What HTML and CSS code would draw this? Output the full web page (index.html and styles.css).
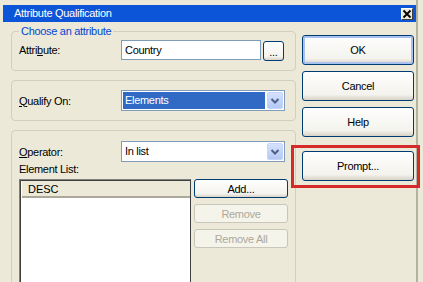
FILE: index.html
```html
<!DOCTYPE html>
<html lang="en">
<head>
    <meta charset="UTF-8">
    <title>Attribute Qualification</title>
    <link rel="stylesheet" href="styles.css">
</head>
<body>
    <div class="window">
        <div class="titlebar">
            <span class="title">Attribute Qualification</span>
            <span class="close">
                <svg width="10" height="10" viewBox="0 0 10 10"><path d="M1.5 1.5 L8.5 8.5 M8.5 1.5 L1.5 8.5" stroke="#000" stroke-width="1.8" fill="none"/></svg>
            </span>
        </div>

        <div class="dialog-body">
            <div class="groups">
                <!-- Attribute picker -->
                <div class="group g-attr">
                    <span class="legend">Choose an attribute</span>
                    <div class="row">
                        <span class="label">Attri<u>b</u>ute:</span>
                        <div class="textbox">Country</div>
                        <div class="btn browse">...</div>
                    </div>
                </div>

                <div class="group g-qualify">
                    <div class="row">
                        <span class="label"><u>Q</u>ualify On:</span>
                        <div class="combo">
                            <div class="combo-value selected">Elements</div>
                            <div class="combo-arrow">
                                <svg width="14" height="15" viewBox="0 0 14 15"><path d="M3.5 6 L7 9.5 L10.5 6" stroke="#4d6185" stroke-width="2" fill="none"/></svg>
                            </div>
                        </div>
                    </div>
                </div>

                <div class="group g-operator">
                    <div class="row">
                        <span class="label"><u>O</u>perator:</span>
                        <div class="combo">
                            <div class="combo-value">In list</div>
                            <div class="combo-arrow">
                                <svg width="14" height="15" viewBox="0 0 14 15"><path d="M3.5 6 L7 9.5 L10.5 6" stroke="#4d6185" stroke-width="2" fill="none"/></svg>
                            </div>
                        </div>
                    </div>
                    <div class="list-label">Element List:</div>
                    <div class="list-row">
                        <div class="listbox">
                            <div class="list-header">DESC</div>
                        </div>
                        <div class="list-buttons">
                            <div class="btn small">Add...</div>
                            <div class="btn small disabled">Remove</div>
                            <div class="btn small disabled">Remove All</div>
                        </div>
                    </div>
                </div>
            </div>

            <div class="actions">
                <div class="btn big default">OK</div>
                <div class="btn big">Cancel</div>
                <div class="btn big">Help</div>
                <div class="prompt-wrap">
                    <div class="btn big">Prompt...</div>
                    <div class="highlight"></div>
                </div>
            </div>
        </div>
    </div>
</body>
</html>
```

FILE: styles.css
```css
/* General Reset */
* {
    margin: 0;
    padding: 0;
    box-sizing: border-box;
}

body {
    font-family: "Liberation Sans", Arial, sans-serif;
    font-size: 11px;
    letter-spacing: -0.3px;
    background-color: #ece9d8; /* XP dialog face */
    color: #000;
    width: 423px;
    height: 282px;
    overflow: hidden;
}

.window {
    width: 418px;
    height: 282px;
    padding-top: 5px;
    border-right: 2px solid #b5b2a3;
}

/* Title bar */
.titlebar {
    margin-left: 3px;
    width: 413px;
    height: 17px;
    background: #0d55d8;
    color: #fff;
    display: flex;
    align-items: center;
    justify-content: space-between;
    padding: 0 3px 0 11px;
}

.title {
    line-height: 17px;
}

.close {
    width: 12px;
    height: 12px;
    background: #ece9d8;
    border: 1px solid;
    border-color: #fff #404040 #404040 #fff;
    display: flex;
    align-items: center;
    justify-content: center;
}

/* Main layout */
.dialog-body {
    display: flex;
    gap: 6px;
    padding-left: 11px;
    margin-top: 9px;
}

/* groups are cut off by the bottom of the screen */
.groups {
    width: 285px;
    height: 259px;
    overflow: hidden;
    display: flex;
    flex-direction: column;
    gap: 9px;
    padding-top: 8px;
    margin-top: -8px;
}

.group {
    position: relative;
    flex-shrink: 0;
    border: 1px solid #d0d0bf;
    border-radius: 4px;
    padding: 0 7px;
}

.legend {
    position: absolute;
    top: -8px;
    left: 7px;
    padding: 0 2px;
    background: #ece9d8;
    color: #0046d5;
    line-height: 14px;
}

.row {
    display: flex;
    align-items: center;
}

.label {
    width: 102px;
}

.g-attr {
    padding-top: 8px;
    padding-bottom: 10px;
}

.g-attr .row {
    height: 20px;
}

.g-qualify {
    padding-top: 9px;
    padding-bottom: 9px;
}

.g-operator {
    padding-top: 10px;
    height: 170px;
}

/* Inputs */
.textbox {
    width: 140px;
    height: 20px;
    background: #fff;
    border: 1px solid #7f9db9;
    padding-left: 3px;
    line-height: 18px;
}

.combo {
    width: 164px;
    height: 21px;
    background: #fff;
    border: 1px solid #7f9db9;
    display: flex;
}

.combo-value {
    flex: 1;
    margin: 1px;
    padding-left: 2px;
    line-height: 17px;
}

.combo-value.selected {
    background: #316ac5;
    color: #fff;
}

.combo-arrow {
    width: 16px;
    margin: 1px;
    border: 1px solid #c3d3fd;
    border-radius: 2px;
    background: linear-gradient(#d5e2fd, #b4c9f5);
    display: flex;
    align-items: center;
    justify-content: center;
}

/* Buttons */
.btn {
    display: flex;
    align-items: center;
    justify-content: center;
    border: 1px solid #003c74;
    border-radius: 3px;
    background: linear-gradient(#fefefe, #f4f3ee 80%, #d8d2c6);
    color: #000;
}

.btn.browse {
    width: 21px;
    height: 20px;
    margin-left: 2px;
    margin-top: 2px;
    padding-top: 2px;
}

.btn.big {
    width: 112px;
    height: 30px;
}

.btn.default {
    box-shadow: inset 0 0 0 2px #a9c1ee;
}

.btn.small {
    width: 94px;
    height: 19px;
}

.btn.disabled {
    border-color: #c9c7ba;
    background: #f5f4ea;
    color: #aca899;
}

/* Element list */
.list-label {
    margin-top: 1px;
    line-height: 13px;
}

.list-row {
    display: flex;
    gap: 3px;
    margin-top: 3px;
}

.listbox {
    width: 173px;
    height: 120px;
    background: #fff;
    border: 1px solid #404040;
    border-top-color: #808080;
    border-left-color: #808080;
    box-shadow: inset 1px 1px 0 #404040;
    padding: 1px 0 0 2px;
}

.list-header {
    height: 17px;
    background: #ece9d8;
    border-bottom: 2px solid #aca899;
    padding-left: 6px;
    line-height: 16px;
    letter-spacing: 0;
}

.list-buttons {
    display: flex;
    flex-direction: column;
    gap: 6px;
}

/* Right-hand command buttons */
.actions {
    display: flex;
    flex-direction: column;
    gap: 6px;
    margin-top: 4px;
}

.prompt-wrap {
    position: relative;
    margin-top: 8px;
}

.highlight {
    position: absolute;
    top: -6px;
    left: -11px;
    right: -6px;
    bottom: -7px;
    border: 3px solid #d42a2a;
}
```
